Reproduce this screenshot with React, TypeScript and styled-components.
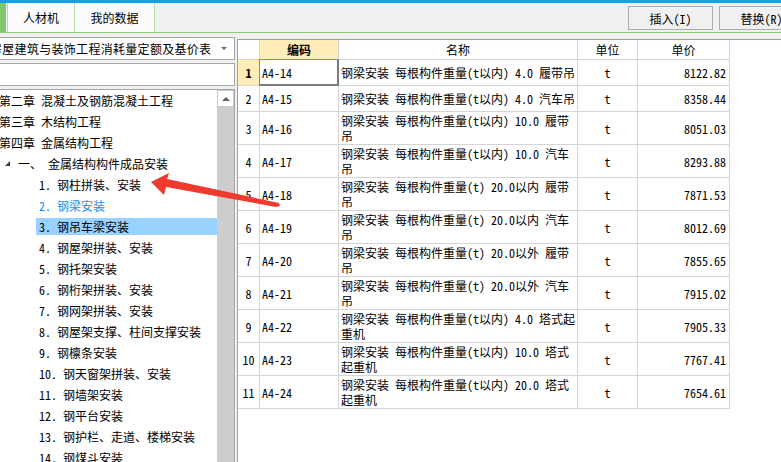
import React from "react";
import styled, { createGlobalStyle, css } from "styled-components";

const FONT = `"Noto Sans Mono CJK SC", "Noto Sans CJK SC", monospace`;

const GlobalStyle = createGlobalStyle`
  *, *::before, *::after { box-sizing: border-box; }
  html, body { margin: 0; padding: 0; width: 781px; height: 462px; overflow: hidden; background: #f0f0f0; }
  body { font-family: ${FONT}; font-size: 12px; color: #000; }
  #root { height: 100%; }
`;

const Page = styled.div`
  position: relative;
  width: 781px;
  height: 462px;
  display: flex;
  flex-direction: column;
  overflow: hidden;
`;

const TopStripe = styled.div`
  height: 3px;
  flex-shrink: 0;
  background: #12a1e6;
`;

const TabBar = styled.div`
  height: 30px;
  flex-shrink: 0;
  display: flex;
  align-items: stretch;
  background: #f0f0f0;
  border-bottom: 1px solid #8dcc7a;
  overflow: hidden;
`;

const GreenEdge = styled.div`
  width: 6px;
  flex-shrink: 0;
  margin-right: 1px;
  background: #84c56f;
`;

const Tab = styled.div<{ $w: number; $first?: boolean }>`
  width: ${(p) => p.$w}px;
  flex-shrink: 0;
  display: flex;
  align-items: center;
  justify-content: center;
  background: #fbfbfb;
  border-right: 1px solid #b5e0a4;
  ${(p) =>
    p.$first &&
    css`
      border-left: 1px solid #b5e0a4;
    `}
`;

const ButtonGroup = styled.div`
  display: flex;
  gap: 6px;
  margin-left: 473px;
  padding-top: 3px;
  flex-shrink: 0;
`;

const ToolButton = styled.button`
  width: 85px;
  height: 24px;
  flex-shrink: 0;
  padding: 0;
  border: 1px solid #acacac;
  background: #f0f0f0;
  color: #000;
  font-family: ${FONT};
  font-size: 12px;
`;

const Body = styled.div`
  flex: 1;
  min-height: 0;
  display: flex;
  gap: 2px;
  padding-top: 4px;
`;

const LeftPane = styled.div`
  width: 247px;
  margin-left: -12px;
  flex-shrink: 0;
  display: flex;
  flex-direction: column;
  gap: 3px;
`;

const Select = styled.div`
  height: 23px;
  flex-shrink: 0;
  display: flex;
  align-items: center;
  background: #fff;
  border: 1px solid #a5a5a5;
`;

const SelectText = styled.div`
  width: 224px;
  flex-shrink: 0;
  overflow: hidden;
  white-space: nowrap;
  padding-left: 1px;
  letter-spacing: 0.3px;
`;

const SelectArrow = styled.div`
  flex: 1;
  display: flex;
  justify-content: center;
  &::before {
    content: "";
    border-style: solid;
    border-width: 3px 3px 0 3px;
    border-color: #6a6a6a transparent transparent transparent;
  }
`;

const SearchBox = styled.div`
  height: 23px;
  flex-shrink: 0;
  background: #fff;
  border: 1px solid #a5a5a5;
`;

const TreeBox = styled.div`
  flex: 1;
  min-height: 0;
  display: flex;
  background: #fff;
  border: 1px solid #a5a5a5;
  border-bottom: none;
`;

const TreeList = styled.div`
  flex: 1;
  min-width: 0;
  overflow: hidden;
`;

type Kind = "chapter" | "section" | "item";

const indent: Record<Kind, number> = { chapter: 7, section: 16, item: 47 };

const TreeRow = styled.div<{ $kind: Kind }>`
  height: 21px;
  display: flex;
  align-items: center;
  padding-left: ${(p) => indent[p.$kind]}px;
`;

const Caret = styled.span`
  width: 0;
  height: 0;
  margin-right: 5px;
  border-style: solid;
  border-width: 0 0 5px 5px;
  border-color: transparent transparent #3c3c3c transparent;
`;

const Label = styled.div<{ $selected?: boolean; $active?: boolean }>`
  flex: 1;
  height: 17px;
  display: flex;
  align-items: center;
  padding-left: 3px;
  white-space: pre;
  overflow: hidden;
  color: ${(p) => (p.$active ? "#1a8cf0" : "#000")};
  background: ${(p) => (p.$selected ? "#99d1ff" : "transparent")};
`;

const ScrollBar = styled.div`
  width: 17px;
  flex-shrink: 0;
  display: flex;
  flex-direction: column;
  background: #cdcdcd;
`;

const ScrollUp = styled.div`
  height: 17px;
  display: flex;
  align-items: center;
  justify-content: center;
  background: #fff;
  border: 1px solid #c9c9c9;
  &::before {
    content: "";
    border-style: solid;
    border-width: 0 4px 4px 4px;
    border-color: transparent transparent #606060 transparent;
  }
`;

const GridPane = styled.div`
  flex: 1;
  min-width: 0;
  margin-top: 2px;
  background: #fff;
  border-top: 1px solid #a0a0a0;
  border-left: 1px solid #a0a0a0;
  overflow: hidden;
`;

const Table = styled.table`
  border-collapse: separate;
  border-spacing: 0;
  table-layout: fixed;
  width: 492px;
  font-size: 12px;
  line-height: 15px;
`;

const HeadCell = styled.th<{ $w: number; $hl?: boolean }>`
  width: ${(p) => p.$w}px;
  height: 20px;
  padding: 0;
  text-align: center;
  font-weight: ${(p) => (p.$hl ? 700 : 400)};
  background: ${(p) => (p.$hl ? "#feedb6" : "#fff")};
  border-right: 1px solid #d5d5d5;
  border-bottom: 1px solid #d5d5d5;
`;

const Row = styled.tr<{ $tall: boolean }>`
  height: ${(p) => (p.$tall ? 33 : 26)}px;
`;

type Align = "left" | "center" | "right";

const Cell = styled.td<{ $align: Align; $pl?: number; $pr?: number; $mark?: boolean; $sel?: boolean }>`
  position: relative;
  padding: 0 ${(p) => p.$pr ?? 0}px 0 ${(p) => p.$pl ?? 0}px;
  text-align: ${(p) => p.$align};
  vertical-align: middle;
  word-break: break-all;
  font-weight: ${(p) => (p.$mark ? 700 : 400)};
  background: ${(p) => (p.$mark ? "#feedb6" : "#fff")};
  border-right: 1px solid #d5d5d5;
  border-bottom: 1px solid #d5d5d5;
  ${(p) =>
    p.$sel &&
    css`
      &::after {
        content: "";
        position: absolute;
        top: -1px;
        left: -1px;
        right: -1px;
        bottom: -1px;
        border-top: 1px solid #3aa3da;
        border-left: 1px solid #3aa3da;
        border-right: 2px solid #7c7c7c;
        border-bottom: 2px solid #7c7c7c;
      }
    `}
`;

const ArrowLayer = styled.svg`
  position: absolute;
  left: 0;
  top: 0;
  width: 781px;
  height: 462px;
  pointer-events: none;
`;

type TreeItem = { kind: Kind; text: string; active?: boolean; selected?: boolean };

const tree: TreeItem[] = [
  { kind: "chapter", text: "第二章 混凝土及钢筋混凝土工程" },
  { kind: "chapter", text: "第三章 木结构工程" },
  { kind: "chapter", text: "第四章 金属结构工程" },
  { kind: "section", text: "一、 金属结构构件成品安装" },
  { kind: "item", text: "1. 钢柱拼装、安装" },
  { kind: "item", text: "2. 钢梁安装", active: true },
  { kind: "item", text: "3. 钢吊车梁安装", selected: true },
  { kind: "item", text: "4. 钢屋架拼装、安装" },
  { kind: "item", text: "5. 钢托架安装" },
  { kind: "item", text: "6. 钢桁架拼装、安装" },
  { kind: "item", text: "7. 钢网架拼装、安装" },
  { kind: "item", text: "8. 钢屋架支撑、柱间支撑安装" },
  { kind: "item", text: "9. 钢檩条安装" },
  { kind: "item", text: "10. 钢天窗架拼装、安装" },
  { kind: "item", text: "11. 钢墙架安装" },
  { kind: "item", text: "12. 钢平台安装" },
  { kind: "item", text: "13. 钢护栏、走道、楼梯安装" },
  { kind: "item", text: "14. 钢煤斗安装" },
  { kind: "item", text: "15. 钢漏斗安装" },
];

type Quota = { code: string; name: string; unit: string; price: string; tall: boolean };

const rows: Quota[] = [
  { code: "A4-14", name: "钢梁安装 每根构件重量(t以内) 4.0 履带吊", unit: "t", price: "8122.82", tall: false },
  { code: "A4-15", name: "钢梁安装 每根构件重量(t以内) 4.0 汽车吊", unit: "t", price: "8358.44", tall: false },
  { code: "A4-16", name: "钢梁安装 每根构件重量(t以内) 10.0 履带吊", unit: "t", price: "8051.03", tall: true },
  { code: "A4-17", name: "钢梁安装 每根构件重量(t以内) 10.0 汽车吊", unit: "t", price: "8293.88", tall: true },
  { code: "A4-18", name: "钢梁安装 每根构件重量(t) 20.0以内 履带吊", unit: "t", price: "7871.53", tall: true },
  { code: "A4-19", name: "钢梁安装 每根构件重量(t) 20.0以内 汽车吊", unit: "t", price: "8012.69", tall: true },
  { code: "A4-20", name: "钢梁安装 每根构件重量(t) 20.0以外 履带吊", unit: "t", price: "7855.65", tall: true },
  { code: "A4-21", name: "钢梁安装 每根构件重量(t) 20.0以外 汽车吊", unit: "t", price: "7915.02", tall: true },
  { code: "A4-22", name: "钢梁安装 每根构件重量(t以内) 4.0 塔式起重机", unit: "t", price: "7905.33", tall: true },
  { code: "A4-23", name: "钢梁安装 每根构件重量(t以内) 10.0 塔式起重机", unit: "t", price: "7767.41", tall: true },
  { code: "A4-24", name: "钢梁安装 每根构件重量(t以内) 20.0 塔式起重机", unit: "t", price: "7654.61", tall: true },
];

export default function App() {
  return (
    <Page>
      <GlobalStyle />
      <TopStripe />
      <TabBar>
        <GreenEdge />
        <Tab $w={68} $first>
          人材机
        </Tab>
        <Tab $w={80}>我的数据</Tab>
        <ButtonGroup>
          <ToolButton>插入(I)</ToolButton>
          <ToolButton>替换(R)</ToolButton>
        </ButtonGroup>
      </TabBar>
      <Body>
        <LeftPane>
          <Select>
            <SelectText>房屋建筑与装饰工程消耗量定额及基价表(2017)</SelectText>
            <SelectArrow />
          </Select>
          <SearchBox />
          <TreeBox>
            <TreeList>
              {tree.map((t, i) => (
                <TreeRow key={i} $kind={t.kind}>
                  {t.kind === "section" && <Caret />}
                  <Label $active={t.active} $selected={t.selected}>
                    {t.text}
                  </Label>
                </TreeRow>
              ))}
            </TreeList>
            <ScrollBar>
              <ScrollUp />
            </ScrollBar>
          </TreeBox>
        </LeftPane>
        <GridPane>
          <Table>
            <thead>
              <tr>
                <HeadCell $w={22} />
                <HeadCell $w={79} $hl>
                  编码
                </HeadCell>
                <HeadCell $w={239}>名称</HeadCell>
                <HeadCell $w={60}>单位</HeadCell>
                <HeadCell $w={92}>单价</HeadCell>
              </tr>
            </thead>
            <tbody>
              {rows.map((r, i) => (
                <Row key={r.code} $tall={r.tall}>
                  <Cell $align="center" $mark={i === 0}>
                    {i + 1}
                  </Cell>
                  <Cell $align="left" $pl={2} $sel={i === 0}>
                    {r.code}
                  </Cell>
                  <Cell $align="left" $pl={2}>
                    {r.name}
                  </Cell>
                  <Cell $align="center">{r.unit}</Cell>
                  <Cell $align="right" $pr={3}>
                    {r.price}
                  </Cell>
                </Row>
              ))}
            </tbody>
          </Table>
        </GridPane>
      </Body>
      <ArrowLayer viewBox="0 0 781 462">
        <polygon
          points="151,182 169,173 167,179 279,203 280,206 276,207 166,187 164,195"
          fill="#ef3b2d"
        />
      </ArrowLayer>
    </Page>
  );
}
